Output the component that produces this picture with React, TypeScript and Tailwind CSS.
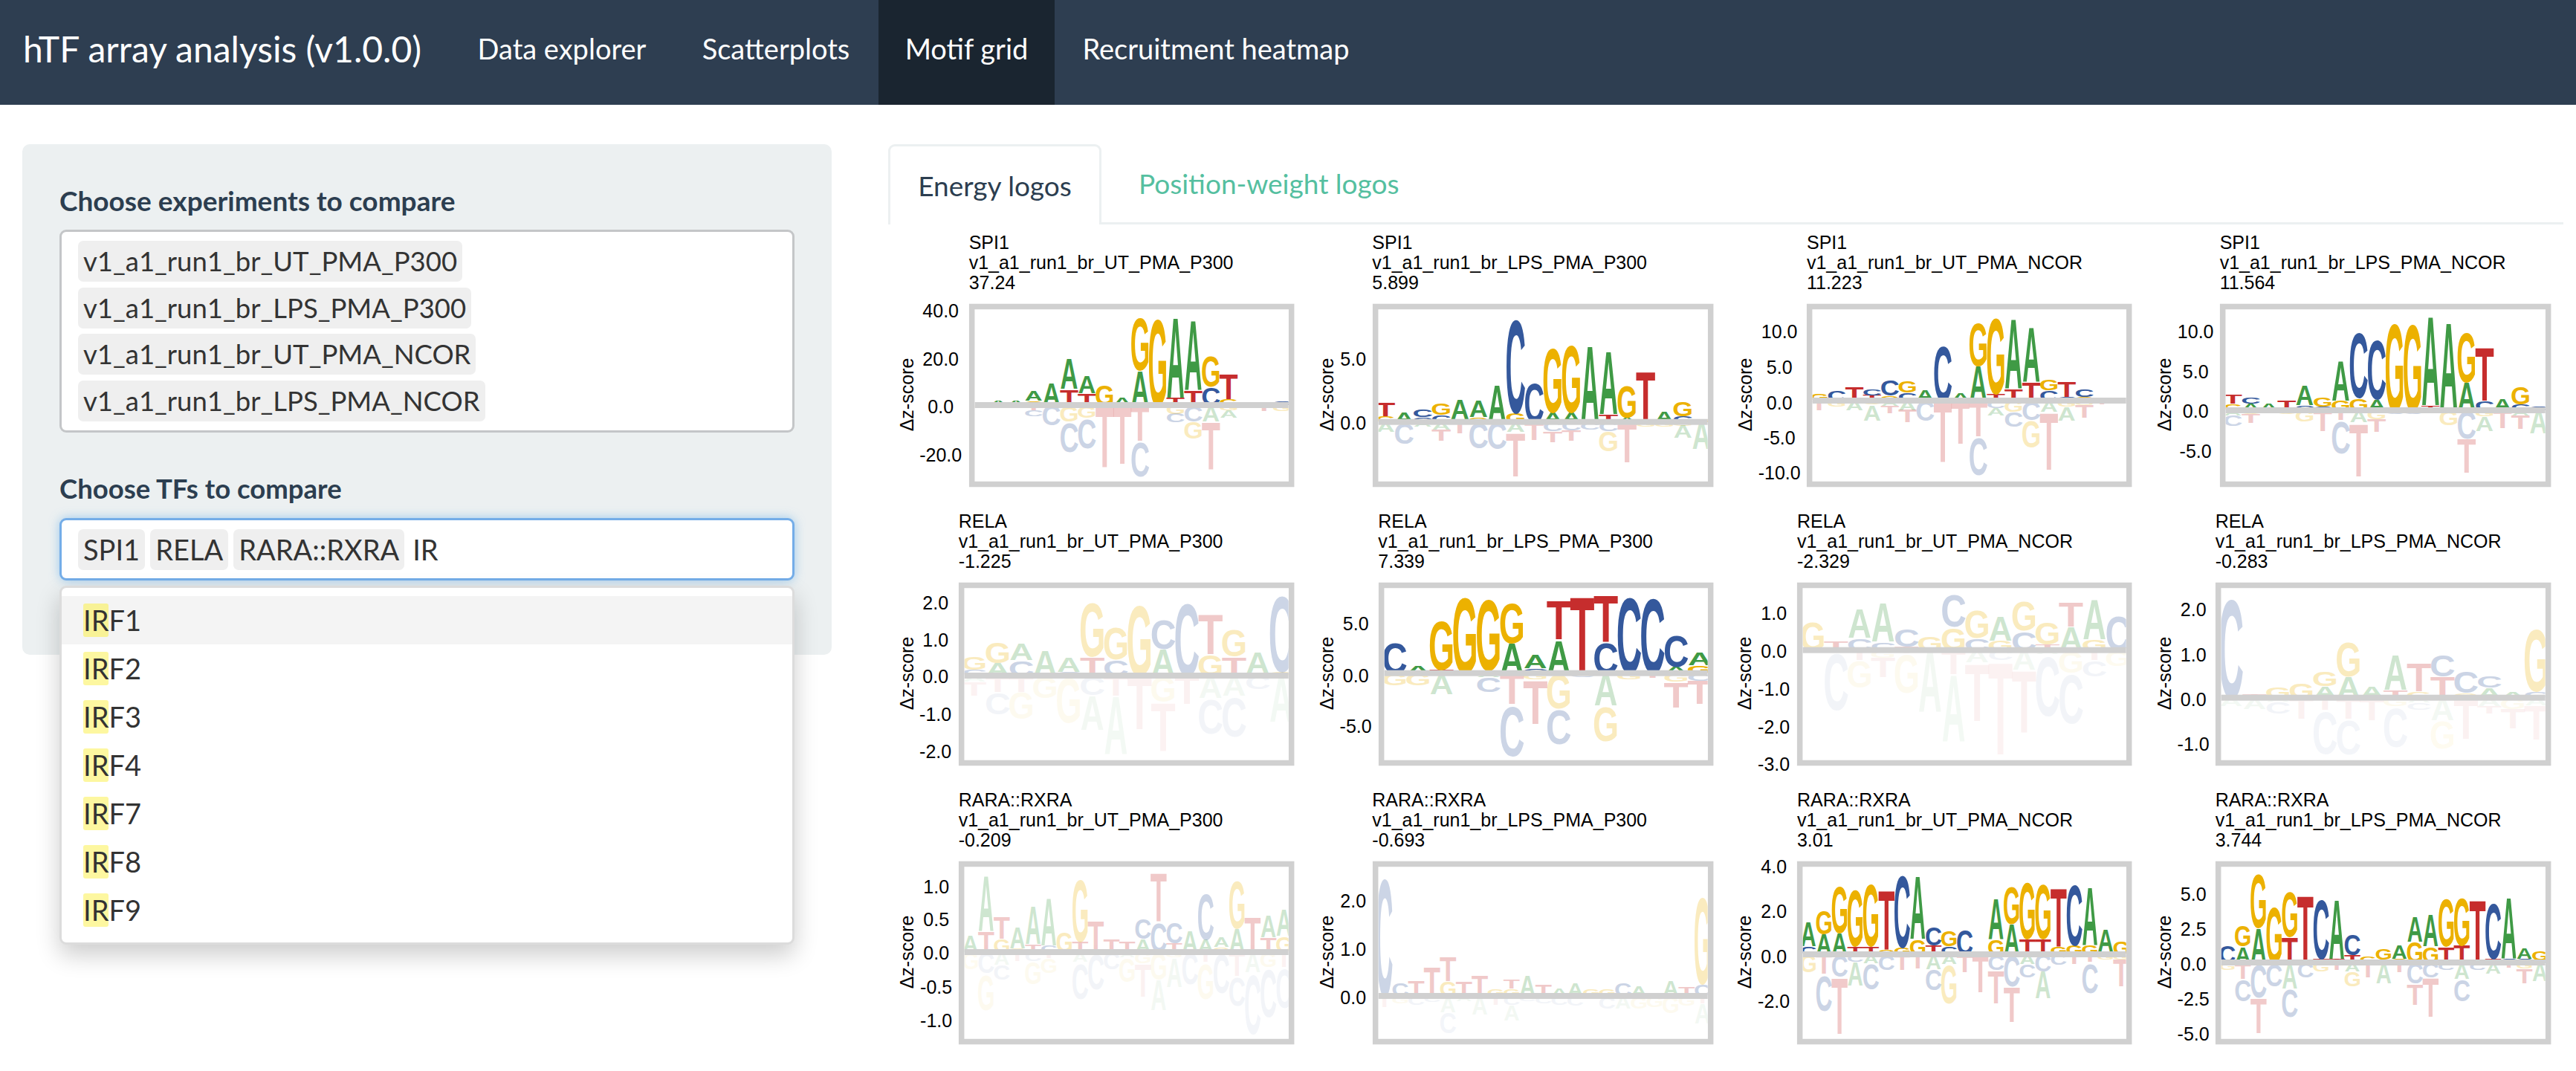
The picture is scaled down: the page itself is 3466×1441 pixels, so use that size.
import React from "react";

const COLORS: Record<string, string> = { A: "#3f9a45", C: "#34589c", G: "#ecb100", T: "#c62d2d" };
const INK: Record<string, number> = { A: 0.72, C: 0.66, G: 0.7, T: 0.58 };
const CAP: Record<string, number> = { A: 0.716, C: 0.74, G: 0.74, T: 0.716 };

type Plot = {
  tf: string; exp: string; val: string; w: number; band: number; c0: number; pitch: number;
  up: number; down: number; tickX: number; labelX: number; ticks: [string, number][]; cols: string[];
};

const PLOTS: Plot[] = [
  { tf: "SPI1", exp: "v1_a1_run1_br_UT_PMA_P300", val: "37.24", w: 438, band: 136, c0: 15.6, pitch: 23.85, up: 1, down: 0.25, tickX: -38, labelX: -84,
    ticks: [["40.0", 9], ["20.0", 74], ["0.0", 138], ["-20.0", 203]],
    cols: ["|G12", "A18|G10", "A18|A10", "G18A39|T20C25", "A90|C80", "T65A123|G65C125", "T47A73|G50C123", "G80|T253", "A30|T237", "A140G223|T143C144", "G365|", "T30A330|G35C35", "T60A287|C65G70", "C75G128|A65T195", "G25T103|G20A30", "|", "C10|T25", "C15|G25"] },
  { tf: "SPI1", exp: "v1_a1_run1_br_LPS_PMA_P300", val: "5.899", w: 459, band: 158.7, c0: 17.5, pitch: 25, up: 1, down: 0.25, tickX: -26, labelX: -62,
    ticks: [["5.0", 74], ["0.0", 160]],
    cols: ["G23T57|A40", "A38|C87", "C20C33|A20", "C28G50|A30T47", "G10A80|T47", "G20A68|C107", "A153|C110", "G38C395|A39T180", "C165|T73", "A38G272|C37T45", "A38G285|C35T42", "A316|C30", "T33A257|C37G80", "A18G135|T162", "T208|G20", "A45|G20", "C23G62|G15A50", "G13|A110"] },
  { tf: "SPI1", exp: "v1_a1_run1_br_UT_PMA_NCOR", val: "11.223", w: 438, band: 130, c0: 16.8, pitch: 23.8, up: 1, down: 0.25, tickX: -36.5, labelX: -83,
    ticks: [["10.0", 37], ["5.0", 85], ["0.0", 133], ["-5.0", 180], ["-10.0", 227]],
    cols: ["G30|T40", "C42|G25", "T55|A38", "T22C25|G15A65", "G22C67|A20T30", "C32G47|A38T50", "A42|C80", "C232|T245", "A32|T175", "A142G180|T145C155", "T27G320|C30A30", "T47A285|G45C60", "T77A225|C78G110", "C42G45|A45T235", "C15T62|G25A55", "G15C32|G18T50", "C5|T15", "|T10"] },
  { tf: "SPI1", exp: "v1_a1_run1_br_LPS_PMA_NCOR", val: "11.564", w: 446, band: 143, c0: 17.5, pitch: 24.2, up: 1, down: 0.25, tickX: -32.5, labelX: -75,
    ticks: [["10.0", 37], ["5.0", 91], ["0.0", 144], ["-5.0", 198]],
    cols: ["G26T37|A20C44", "A26C25|G15T35", "A26|", "T41|G15", "C20A78|G46", "C15G36|T84", "G40A165|T39C135", "G50C275|A49T217", "A45C253|G36T50", "G370|C15", "G365|C15", "T20A365|C10", "T10A350|G60", "A115G210|C113T138", "C38T220|G25A60", "A46|T72", "C25G75|A20T55", "C15|A94"] },
  { tf: "RELA", exp: "v1_a1_run1_br_UT_PMA_P300", val: "-1.225", w: 452, band: 125, c0: 21, pitch: 31.8, up: 0.25, down: 0.06, tickX: -31, labelX: -70,
    ticks: [["2.0", 27], ["1.0", 77], ["0.0", 126], ["-1.0", 177], ["-2.0", 227]],
    cols: ["C25G55|A25T55", "A52G85|T65C90", "C62A67|T65G110", "A105|G90", "C15A60|G190", "T77G225|C78A140", "C67G135|T80A238", "G295|T215", "A107C125|G105T200", "C305|T115", "G87T165|A90C145", "T77G112|A80C165", "T10A87|C55", "G15C320|A185"] },
  { tf: "RELA", exp: "v1_a1_run1_br_LPS_PMA_P300", val: "7.339", w: 451, band: 121.7, c0: 21.8, pitch: 31.56, up: 1, down: 0.25, tickX: -30.5, labelX: -70,
    ticks: [["5.0", 55], ["0.0", 125], ["-5.0", 193]],
    cols: ["C127|G50", "A32|G50", "T15G205|T5A80", "G322|", "T12G302|A15C60", "A122G170|T125C210", "C20A55|G25T180", "A137T160|G143C143", "T314|C15", "C129T191|A131G142", "C322|G25", "C319|T20", "A27C130|G33T105", "G32A53|C30T95"] },
  { tf: "RELA", exp: "v1_a1_run1_br_UT_PMA_NCOR", val: "-2.329", w: 451, band: 90.7, c0: 21.2, pitch: 31.6, up: 0.25, down: 0.06, tickX: -31, labelX: -71,
    ticks: [["1.0", 41], ["0.0", 92], ["-1.0", 143], ["-2.0", 194], ["-3.0", 244]],
    cols: ["G119|", "T37|C240", "C49A118|T40G110", "C34A160|G30T80", "T15C74|T12G160", "G59|A250", "G94C135|T96A275", "C49G115|A50T235", "G39A100|C40T380", "C79G125|A80T255", "T24G95|A15C250", "A94T100|G90C205", "G44A165|T40C65", "C144|G65"] },
  { tf: "RELA", exp: "v1_a1_run1_br_LPS_PMA_NCOR", val: "-0.283", w: 452, band: 154.7, c0: 21.2, pitch: 31.6, up: 0.25, down: 0.06, tickX: -29.5, labelX: -69,
    ticks: [["2.0", 36], ["1.0", 97], ["0.0", 157], ["-1.0", 217]],
    cols: ["C421|A35", "T16|A45", "G46|A15C50", "G61|T86", "A46G60|T50C175", "A86G145|T85C145", "A46|T90", "T31A145|G35C165", "G25T116|A20C30", "T86C90|A90G115", "G20C90|T165", "A40C50|A35T30", "A25|G45T80", "C25G265|A30T140"] },
  { tf: "RARA::RXRA", exp: "v1_a1_run1_br_UT_PMA_P300", val: "-0.209", w: 452, band: 122, c0: 16, pitch: 21.1, up: 0.25, down: 0.06, tickX: -30, labelX: -70,
    ticks: [["1.0", 34], ["0.5", 78], ["0.0", 123], ["-0.5", 169], ["-1.0", 214]],
    cols: ["A68|G70", "T83A228|C85G150", "G53T90|A50C60", "G15A88|T35", "T33A155|C35G95", "C28A197|T25G60", "G83|", "T43G262|A40C150", "T128|C150", "T51|C70", "T43|A20G100", "A53C80|G45T135", "C123T200|G110A125", "T35C88|G20A120", "A88|C130", "A50C195|T40G150", "G20A38|C165", "A95G200|T95C120", "T145|A80C250", "T60A90|G60C200", "G65A108|T60C165"] },
  { tf: "RARA::RXRA", exp: "v1_a1_run1_br_LPS_PMA_P300", val: "-0.693", w: 459, band: 181, c0: 16, pitch: 21.4, up: 0.25, down: 0.06, tickX: -26, labelX: -62,
    ticks: [["2.0", 53], ["1.0", 118], ["0.0", 183]],
    cols: ["C500|T45", "C55|G30", "T65|C35", "T120|C25", "G60T100|A65C85", "T60|A20", "T82|A75", "G30|T35", "G30T35|C35A65", "A85|C20", "T48|C30", "A30|C35", "A50|C40", "G30|", "G30|C50", "C52|A50", "A40|G50", "|G45", "A65|G70", "T35|G40", "C50G365|T30A80"] },
  { tf: "RARA::RXRA", exp: "v1_a1_run1_br_UT_PMA_NCOR", val: "3.01", w: 451, band: 125, c0: 15.4, pitch: 21.05, up: 1, down: 0.25, tickX: -31, labelX: -71,
    ticks: [["4.0", 7], ["2.0", 67], ["0.0", 128], ["-2.0", 188]],
    cols: ["C32A100|G73", "A82G100|T78C150", "A87G197|C90T230", "T32G238|C30A95", "T32G262|A35C105", "G22T242|C63", "G27C305|T63", "G62A258|T58", "T37C77|A60C85", "C32G65|A38G160", "C102|T73", "|T153", "G60A167|C63T135", "A122G155|C128T145", "T62G240|A38C55", "T62G230|C68A110", "G32T240|C43", "G37C255|T40", "G37A240|T30C125", "C12A92|G20", "G52|G20T110"] },
  { tf: "RARA::RXRA", exp: "v1_a1_run1_br_LPS_PMA_NCOR", val: "3.744", w: 452, band: 136, c0: 16, pitch: 21.05, up: 1, down: 0.25, tickX: -29.5, labelX: -69,
    ticks: [["5.0", 44], ["2.5", 91], ["0.0", 138], ["-2.5", 185], ["-5.0", 232]],
    cols: ["C70|G30", "A65G85|T65C90", "A140G225|C140T145", "G235|C95", "T105G190|A105C115", "T275|C60", "T15C252|G35", "T15A245|T30", "T30C85|A35G60", "G25|T60", "C12G45|A85", "G15A55|T40", "G85A105|C85T85", "G65A130|C60T160", "T65G200|C30", "T70G200|A65C90", "T255|C30", "T15C235|A45", "C15A250|T20", "C15A45|G25T60", "C10G35|A75"] },
];

const parse = (s: string) => [...s.matchAll(/([ACGT])(\d+)/g)].map((m) => ({ l: m[1], h: Number(m[2]) / 3 }));

function Letter({ l, cx, bottom, h, pitch, opacity }: { l: string; cx: number; bottom: number; h: number; pitch: number; opacity: number }) {
  const sx = pitch / (INK[l] * 100);
  const sy = h / (CAP[l] * 100);
  return (
    <text
      transform={`translate(${cx} ${bottom}) scale(${sx} ${sy})`}
      fontFamily="'Liberation Sans', sans-serif"
      fontWeight="700"
      fontSize="100"
      textAnchor="middle"
      fill={COLORS[l]}
      opacity={opacity}
    >
      {l}
    </text>
  );
}

function Chart({ p, id }: { p: Plot; id: number }) {
  const H = 246;
  const left = 563.67 - p.w;
  return (
    <svg width="564" height={H} viewBox={`0 0 564 ${H}`} className="block overflow-visible">
      <defs>
        <clipPath id={`c${id}`}>
          <rect x={left + 8} y={7} width={p.w - 16} height={H - 14} />
        </clipPath>
      </defs>
      <g fontFamily="'Liberation Sans', sans-serif" fontSize="25" fill="#000" textAnchor="middle">
        {p.ticks.map(([t, y]) => (
          <text key={t} x={left + p.tickX} y={y} dominantBaseline="central">{t}</text>
        ))}
        <text transform={`translate(${left + p.labelX} ${H / 2 - 1}) rotate(-90)`} dominantBaseline="central">Δz-score</text>
      </g>
      <g clipPath={`url(#c${id})`}>
        {p.cols.map((col, i) => {
          const [u, d] = col.split("|");
          const cx = left + p.c0 + i * p.pitch;
          let yu = p.band;
          let yd = p.band;
          return (
            <g key={i}>
              {parse(d).map((s, k) => {
                yd += s.h;
                return <Letter key={"d" + k} l={s.l} cx={cx} bottom={yd} h={s.h} pitch={p.pitch} opacity={p.down} />;
              })}
              {parse(u).map((s, k) => {
                const b = yu;
                yu -= s.h;
                return <Letter key={"u" + k} l={s.l} cx={cx} bottom={b} h={s.h} pitch={p.pitch} opacity={p.up} />;
              })}
            </g>
          );
        })}
      </g>
      <rect x={left + 8} y={p.band - 4} width={p.w - 16} height={8} fill="#d0d0d0" />
      <rect x={left + 4} y={3.5} width={p.w - 8} height={H - 7} fill="none" stroke="#d0d0d0" strokeWidth={7.5} />
    </svg>
  );
}

function PlotCell({ p, id }: { p: Plot; id: number }) {
  return (
    <div className="h-[375px]">
      <div className="text-[25px] leading-[27px] text-black whitespace-nowrap [font-family:'Liberation_Sans',sans-serif] mb-[15px]" style={{ marginLeft: 563.67 - p.w }}>
        <div>{p.tf}</div>
        <div>{p.exp}</div>
        <div>{p.val}</div>
      </div>
      <Chart p={p} id={id} />
    </div>
  );
}

function Chip({ children }: { children: React.ReactNode }) {
  return <div className="h-[55px] px-[7px] rounded-[7px] bg-[#efefef] text-[#333] flex items-center whitespace-nowrap">{children}</div>;
}

const NAV = [
  { t: "Data explorer", w: "w-[300px]" },
  { t: "Scatterplots", w: "w-[276px]" },
  { t: "Motif grid", w: "w-[237px]", active: true },
  { t: "Recruitment heatmap", w: "w-[434px]" },
];

export default function App() {
  return (
    <div className="h-[1441px] w-[3466px] overflow-hidden bg-white text-[36.5px] [font-family:Lato,sans-serif]">
      <nav className="h-[141px] bg-[#2e3e51] flex text-white text-[38px]">
        <div className="w-[606px] pl-[31px] pb-[10px] flex items-center text-[48px]">hTF array analysis (v1.0.0)</div>
        {NAV.map((n) => (
          <div key={n.t} className={`${n.w} pb-[10px] flex items-center justify-center ${n.active ? "bg-[#1a2530]" : ""}`}>{n.t}</div>
        ))}
      </nav>

      <main className="flex pt-[53px]">
        <aside className="ml-[30px] w-[1089px] shrink-0">
          <div className="h-[687px] rounded-[10px] bg-[#ecf0f1] px-[50px] pt-[51px]">
            <label className="block h-[50px] leading-[50px] font-bold text-[37px] text-[#2c3e50]">Choose experiments to compare</label>
            <div className="mt-[14px] h-[273px] rounded-[9px] border-[3px] border-[#c4c6c8] bg-white pl-[22px] pt-[12px] flex flex-col items-start gap-[7.6px]">
              <Chip>v1_a1_run1_br_UT_PMA_P300</Chip>
              <Chip>v1_a1_run1_br_LPS_PMA_P300</Chip>
              <Chip>v1_a1_run1_br_UT_PMA_NCOR</Chip>
              <Chip>v1_a1_run1_br_LPS_PMA_NCOR</Chip>
            </div>
            <label className="block mt-[50px] h-[50px] leading-[50px] font-bold text-[#2c3e50]">Choose TFs to compare</label>
            <div className="relative mt-[15px] text-[38px]">
              <div className="h-[84px] rounded-[9px] border-[3px] border-[#74ade8] bg-white pl-[22px] flex items-center gap-[7px] shadow-[0_0_14px_rgba(102,175,233,0.6)] text-[#333]">
                <Chip>SPI1</Chip>
                <Chip>RELA</Chip>
                <Chip>RARA::RXRA</Chip>
                <span className="ml-[4px]">IR</span>
              </div>
              <div className="absolute left-0 right-0 top-[91px] h-[483px] rounded-[9px] border-[3px] border-[#dcdcdc] bg-white py-[11px] shadow-[0_14px_32px_rgba(0,0,0,0.2)] text-[#333]">
                {["IRF1", "IRF2", "IRF3", "IRF4", "IRF7", "IRF8", "IRF9"].map((r, i) => (
                  <div key={r} className={`h-[65px] pl-[29px] flex items-center ${i === 0 ? "bg-[#f4f4f4]" : ""}`}>
                    <span className={`h-[45px] leading-[45px] rounded-[3px] ${i === 0 ? "bg-[#f8f296]" : "bg-[#fdf7a0]"}`}>{r.slice(0, 2)}</span>
                    <span>{r.slice(2)}</span>
                  </div>
                ))}
              </div>
            </div>
          </div>
        </aside>

        <section className="ml-[76px] w-[2254px] shrink-0 text-[37px]">
          <div className="flex h-[108px] border-b-[3px] border-[#ecf0f1]">
            <div className="w-[287px] h-[108px] rounded-t-[9px] border-[3px] border-b-0 border-[#ecf0f1] bg-white text-[#2c3e50] flex items-center justify-center">Energy logos</div>
            <div className="pl-[50px] h-[105px] flex items-center text-[#55bfa0]">Position-weight logos</div>
          </div>
          <div className="-ml-[17px] mt-[11px] grid grid-cols-[repeat(4,563.67px)]">
            {PLOTS.map((p, i) => (
              <PlotCell key={i} p={p} id={i} />
            ))}
          </div>
        </section>
      </main>
    </div>
  );
}
